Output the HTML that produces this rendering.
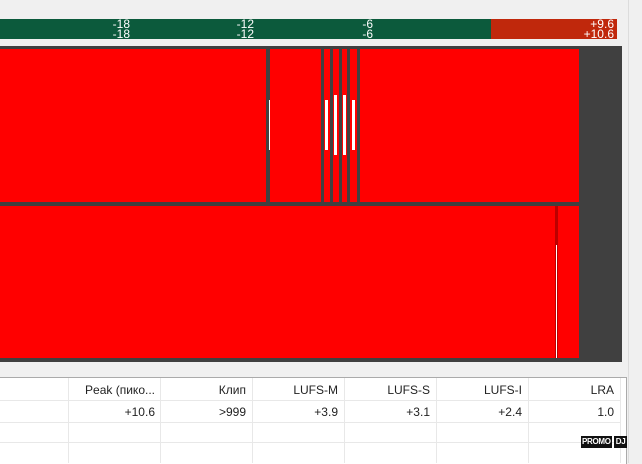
<!DOCTYPE html>
<html><head><style>
body{margin:0;width:642px;height:463px;background:#f0f0f0;position:relative;overflow:hidden;font-family:"Liberation Sans",sans-serif}
.a{position:absolute}
.t{font-size:12px;color:#fff;line-height:10px;text-align:right}
.c{position:absolute;font-size:12px;color:#222;text-align:right}
</style></head><body>
<div class="a" style="left:628px;top:0;width:1px;height:463px;background:#dcdcdc"></div>
<div class="a" style="left:0;top:19px;width:491px;height:20px;background:#0c5a3c"></div>
<div class="a" style="left:491px;top:19px;width:126px;height:20px;background:#c0280c"></div>
<div class="a t" style="left:100px;top:19px;width:30px">-18<br>-18</div>
<div class="a t" style="left:224px;top:19px;width:30px">-12<br>-12</div>
<div class="a t" style="left:343px;top:19px;width:30px">-6<br>-6</div>
<div class="a t" style="left:570px;top:19px;width:44px">+9.6<br>+10.6</div>
<div class="a" style="left:0;top:46px;width:622px;height:316px;background:#404040"></div>
<div class="a" style="left:0;top:49px;width:579px;height:153px;background:#ff0000"></div>
<div class="a" style="left:0;top:206px;width:579px;height:152px;background:#ff0000"></div>
<div class="a" style="left:266px;top:49px;width:4px;height:153px;background:#404040"></div>
<div class="a" style="left:269px;top:100px;width:1px;height:50px;background:#fff"></div>
<div class="a" style="left:321px;top:49px;width:3px;height:153px;background:#404040"></div>
<div class="a" style="left:330px;top:49px;width:3px;height:153px;background:#404040"></div>
<div class="a" style="left:339px;top:49px;width:3px;height:153px;background:#404040"></div>
<div class="a" style="left:347px;top:49px;width:3px;height:153px;background:#404040"></div>
<div class="a" style="left:357px;top:49px;width:3px;height:153px;background:#404040"></div>
<div class="a" style="left:325px;top:100px;width:3px;height:50px;background:#fff"></div>
<div class="a" style="left:334px;top:95px;width:3px;height:60px;background:#fff"></div>
<div class="a" style="left:343px;top:95px;width:3px;height:60px;background:#fff"></div>
<div class="a" style="left:352px;top:100px;width:3px;height:50px;background:#fff"></div>
<div class="a" style="left:555px;top:206px;width:3px;height:152px;background:#b00"></div>
<div class="a" style="left:556px;top:245px;width:1px;height:113px;background:#fff"></div>
<div class="a" style="left:0;top:377px;width:626px;height:86px;background:#fff;border-top:1px solid #aaa;border-right:1px solid #aaa"></div>
<div class="a" style="left:0;top:400px;width:620px;height:1px;background:#e8e8e8"></div>
<div class="a" style="left:0;top:422px;width:620px;height:1px;background:#e8e8e8"></div>
<div class="a" style="left:0;top:442px;width:620px;height:1px;background:#e8e8e8"></div>
<div class="a" style="left:68px;top:378px;width:1px;height:85px;background:#e8e8e8"></div>
<div class="a" style="left:160px;top:378px;width:1px;height:85px;background:#e8e8e8"></div>
<div class="a" style="left:252px;top:378px;width:1px;height:85px;background:#e8e8e8"></div>
<div class="a" style="left:344px;top:378px;width:1px;height:85px;background:#e8e8e8"></div>
<div class="a" style="left:436px;top:378px;width:1px;height:85px;background:#e8e8e8"></div>
<div class="a" style="left:528px;top:378px;width:1px;height:85px;background:#e8e8e8"></div>
<div class="a" style="left:620px;top:378px;width:1px;height:85px;background:#e8e8e8"></div>
<div class="c" style="left:60px;top:383px;width:95px">Peak (пико...</div>
<div class="c" style="left:160px;top:383px;width:86px">Клип</div>
<div class="c" style="left:252px;top:383px;width:86px">LUFS-M</div>
<div class="c" style="left:344px;top:383px;width:86px">LUFS-S</div>
<div class="c" style="left:436px;top:383px;width:86px">LUFS-I</div>
<div class="c" style="left:528px;top:383px;width:86px">LRA</div>
<div class="c" style="left:60px;top:405px;width:95px">+10.6</div>
<div class="c" style="left:160px;top:405px;width:86px">&gt;999</div>
<div class="c" style="left:252px;top:405px;width:86px">+3.9</div>
<div class="c" style="left:344px;top:405px;width:86px">+3.1</div>
<div class="c" style="left:436px;top:405px;width:86px">+2.4</div>
<div class="c" style="left:528px;top:405px;width:86px">1.0</div>
<div class="a" style="left:581px;top:436px;width:50px;height:12px;white-space:nowrap;font:bold 8px 'Liberation Sans',sans-serif;line-height:12px;color:#fff;letter-spacing:-0.3px"><span style="background:#111;padding:0 1px;display:inline-block">PROMO</span><span style="background:#111;padding:0 2px;margin-left:2px;display:inline-block">DJ</span></div>
</body></html>
